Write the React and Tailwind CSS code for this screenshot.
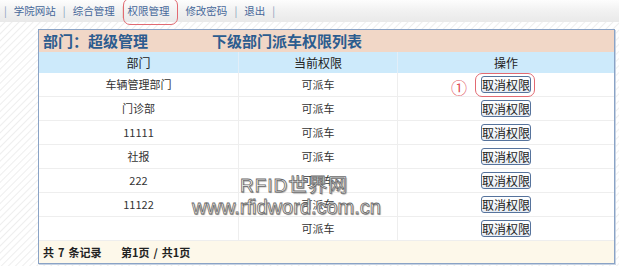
const rows = [
  { dept: "车辆管理部门", perm: "可派车", mark: true },
  { dept: "门诊部", perm: "可派车" },
  { dept: "11111", perm: "可派车" },
  { dept: "社报", perm: "可派车" },
  { dept: "222", perm: "可派车" },
  { dept: "11122", perm: "可派车" },
  { dept: "", perm: "可派车" },
];

const navItems = ["学院网站", "综合管理", "权限管理", "修改密码", "退出"];

export default function App() {
  return (
    <div
      className="relative w-[619px] h-[266px] overflow-hidden bg-white bg-[repeating-linear-gradient(135deg,#ffffff_0px,#ffffff_3px,#eeeeee_4px,#ffffff_5px)] text-[#333] font-['Noto_Sans_CJK_SC','Noto_Sans',sans-serif]"
    >
      {/* 顶部导航 */}
      <div className="h-[22px] bg-gradient-to-b from-[#fdfdfd] via-[#f1f1f1] to-[#e9e9e9] flex items-center pl-[4px] text-[10.5px] text-[#46689a]">
        <span className="text-[#8aa0bc]">|</span>
        {navItems.map((item) => (
          <div key={item} className="flex items-center">
            <span className={`relative ${item === "权限管理" ? "ml-[3px] mr-[6px]" : "mx-[7px]"}`}>
              {item}
              {item === "权限管理" && (
                <span className="absolute -left-[5px] -right-[8px] -top-[5px] -bottom-[6px] border-[1.5px] border-[#e26a72] rounded-[7px]" />
              )}
            </span>
            <span className={`text-[#8aa0bc] ${item === "权限管理" ? "invisible" : ""}`}>|</span>
          </div>
        ))}
      </div>

      {/* 主面板 */}
      <div className="pl-[38px] pt-[7px]">
        <div className="w-[577px] border border-[#8aa3c6] shadow-[1px_1px_0_#c7d3e3]">
          <div className="h-[22px] bg-[#f1d7c7] flex items-center pl-[4px] text-[15px] font-bold text-[#2c5c8f]">
            <span className="w-[169px]">部门：超级管理</span>
            <span>下级部门派车权限列表</span>
          </div>
          <div className="h-[21px] bg-[#cdeafb] grid grid-cols-[200px_159px_1fr] text-[12px] text-[#222]">
            <div className="flex items-center justify-center border-r border-[#e2eef8]">部门</div>
            <div className="flex items-center justify-center border-r border-[#e2eef8]">当前权限</div>
            <div className="flex items-center justify-center">操作</div>
          </div>
          {rows.map((r, i) => (
            <div
              key={i}
              className="h-[24px] bg-white grid grid-cols-[200px_159px_1fr] text-[11px] text-[#333] border-b border-[#eeeeee]"
            >
              <div className="flex items-center justify-center border-r border-[#eeeeee]">{r.dept}</div>
              <div className="flex items-center justify-center border-r border-[#eeeeee]">{r.perm}</div>
              <div className="relative flex items-center justify-center">
                <button className="relative w-[50px] h-[17px] text-[12px] leading-none text-[#222] border-[1.5px] border-[#56739c] rounded-[3px] bg-gradient-to-b from-white to-[#e7edf4]">
                  取消权限
                  {r.mark && (
                    <span className="absolute -left-[7px] -right-[5px] -top-[4px] -bottom-[5px] border-[1.5px] border-[#e26a72] rounded-[7px]" />
                  )}
                </button>
                {r.mark && (
                  <span className="absolute left-[53px] top-[2px] text-[16px] text-[#e0505a]">①</span>
                )}
              </div>
            </div>
          ))}
          <div className="h-[22px] bg-[#fdf8ea] flex items-center pl-[4px] text-[11px] font-bold text-[#222]">
            <span className="w-[78px]">
              共<span className="mx-[4px]">7</span>条记录
            </span>
            <span>
              第1页<span className="mx-[4px]">/</span>共1页
            </span>
          </div>
        </div>
      </div>

      {/* 水印 */}
      <div className="absolute left-[240px] top-[176px] text-[19px] leading-none tracking-[1px] text-white font-['Liberation_Sans','Noto_Sans_CJK_SC',sans-serif] [-webkit-text-stroke:0.8px_#6a6a6a] [text-shadow:1px_1px_1px_#999]">
        RFID世界网
      </div>
      <div className="absolute left-[192px] top-[197px] text-[20px] leading-none text-white font-['Liberation_Sans',sans-serif] [-webkit-text-stroke:0.8px_#6a6a6a] [text-shadow:1px_1px_1px_#999]">
        www.rfidword.com.cn
      </div>
    </div>
  );
}
